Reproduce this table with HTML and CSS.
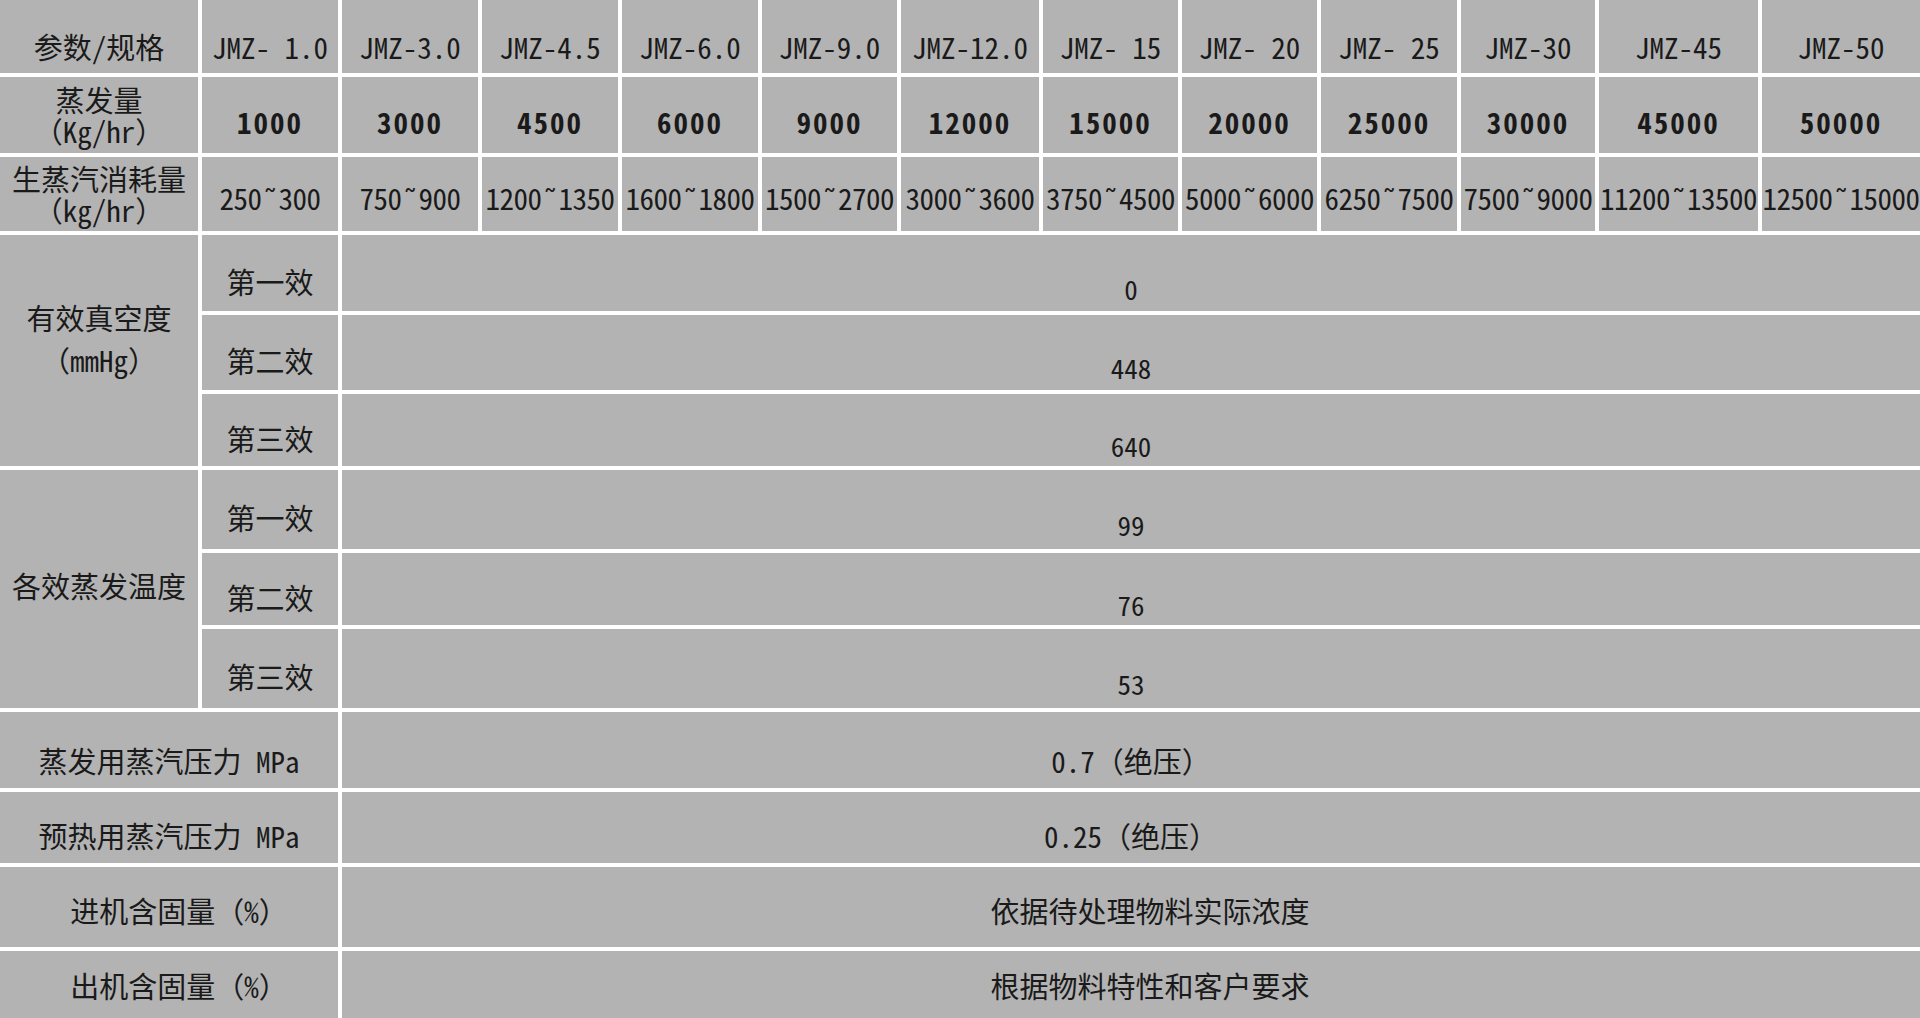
FILE: index.html
```html
<!DOCTYPE html>
<html lang="zh-CN">
<head>
<meta charset="utf-8">
<title>参数/规格</title>
<link rel="stylesheet" href="styles.css">
</head>
<body>
<div class="spec">
  <div class="c hd">参数/规格</div>
  <div class="c hd">JMZ- 1.0</div>
  <div class="c hd">JMZ-3.0</div>
  <div class="c hd">JMZ-4.5</div>
  <div class="c hd">JMZ-6.0</div>
  <div class="c hd">JMZ-9.0</div>
  <div class="c hd">JMZ-12.0</div>
  <div class="c hd">JMZ- 15</div>
  <div class="c hd">JMZ- 20</div>
  <div class="c hd">JMZ- 25</div>
  <div class="c hd">JMZ-30</div>
  <div class="c hd">JMZ-45</div>
  <div class="c hd">JMZ-50</div>

  <div class="c lbl"><span class="ln">蒸发量</span><span class="ln">（Kg/hr）</span></div>
  <div class="c cap">1000</div>
  <div class="c cap">3000</div>
  <div class="c cap">4500</div>
  <div class="c cap">6000</div>
  <div class="c cap">9000</div>
  <div class="c cap">12000</div>
  <div class="c cap">15000</div>
  <div class="c cap">20000</div>
  <div class="c cap">25000</div>
  <div class="c cap">30000</div>
  <div class="c cap">45000</div>
  <div class="c cap">50000</div>

  <div class="c lbl"><span class="ln">生蒸汽消耗量</span><span class="ln">（kg/hr）</span></div>
  <div class="c rng">250˜300</div>
  <div class="c rng">750˜900</div>
  <div class="c rng">1200˜1350</div>
  <div class="c rng">1600˜1800</div>
  <div class="c rng">1500˜2700</div>
  <div class="c rng">3000˜3600</div>
  <div class="c rng">3750˜4500</div>
  <div class="c rng">5000˜6000</div>
  <div class="c rng">6250˜7500</div>
  <div class="c rng">7500˜9000</div>
  <div class="c rng">11200˜13500</div>
  <div class="c rng">12500˜15000</div>

  <div class="c grp grp-vac"><span class="ln">有效真空度</span><span class="ln">（mmHg）</span></div>
  <div class="c sub">第一效</div>
  <div class="c val">0</div>
  <div class="c sub">第二效</div>
  <div class="c val">448</div>
  <div class="c sub">第三效</div>
  <div class="c val">640</div>

  <div class="c grp grp-tmp">各效蒸发温度</div>
  <div class="c sub">第一效</div>
  <div class="c val">99</div>
  <div class="c sub">第二效</div>
  <div class="c val">76</div>
  <div class="c sub">第三效</div>
  <div class="c val">53</div>

  <div class="c wide w1">蒸发用蒸汽压力 MPa</div>
  <div class="c val txt w1">0.7（绝压）</div>
  <div class="c wide w2">预热用蒸汽压力 MPa</div>
  <div class="c val txt w2">0.25（绝压）</div>
  <div class="c wide w3 pct">进机含固量（%）</div>
  <div class="c val txt w3 long">依据待处理物料实际浓度</div>
  <div class="c wide w4 pct">出机含固量（%）</div>
  <div class="c val txt w4 long">根据物料特性和客户要求</div>
</div>
</body>
</html>
```

FILE: styles.css
```css
html, body {
  margin: 0;
  padding: 0;
  background: #ffffff;
}

body {
  width: 1920px;
  height: 1018px;
  overflow: hidden;
  font-family: "Noto Sans Mono CJK SC", "Noto Sans CJK SC", "DejaVu Sans Mono", monospace;
  color: #1a1a1a;
}

.spec {
  display: grid;
  grid-template-columns: 198px 136px 136px 136px 136px 135px 138px 135px 135px 136px 134px 159px 158px;
  grid-template-rows: 73px 76px 74px 76px 75px 72px 79px 72px 79px 76px 71px 80px 67px;
  gap: 4px;
  background: #ffffff;
  width: 1920px;
  height: 1018px;
}

.c {
  background: #b3b3b3;
  display: flex;
  align-items: center;
  justify-content: center;
  text-align: center;
  white-space: nowrap;
  font-size: 29px;
  line-height: 31px;
  box-sizing: border-box;
  overflow: hidden;
}

.lbl,
.grp-vac {
  flex-direction: column;
}

.ln {
  display: block;
  height: 31px;
  line-height: 31px;
}

.hd {
  padding-top: 19px;
}

.cap {
  padding-top: 13px;
  letter-spacing: 2px;
  font-weight: 600;
}

.rng {
  padding-top: 7px;
  letter-spacing: -0.5px;
}

.grp {
  grid-row: span 3;
}

.grp-vac {
  padding-bottom: 24px;
  gap: 11px;
}

.grp-tmp {
  padding-bottom: 8px;
}

.sub {
  padding-top: 16px;
}

.val {
  grid-column: span 11;
  padding-top: 30px;
  font-size: 27px;
}

.wide {
  grid-column: span 2;
}

.txt {
  font-size: 29px;
}

.w1 { padding-top: 21px; }
.w2 { padding-top: 16px; }
.w3 { padding-top: 6px; }
.w4 { padding-top: 1px; }

.pct {
  padding-left: 20px;
}

.long {
  padding-left: 38px;
}
```
